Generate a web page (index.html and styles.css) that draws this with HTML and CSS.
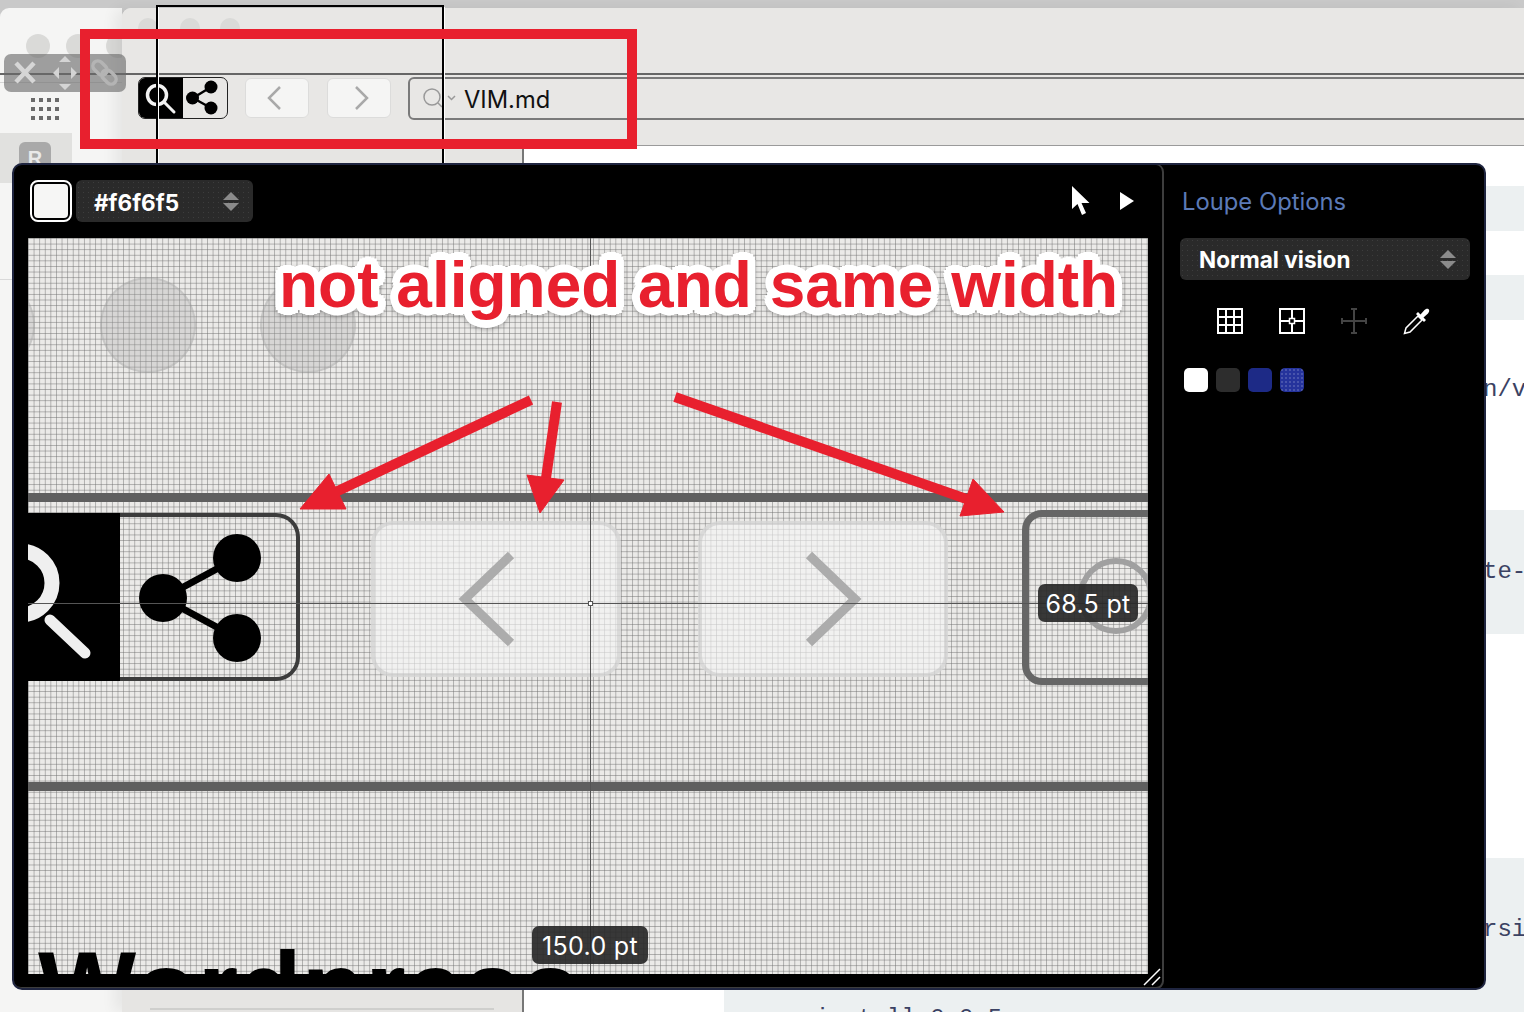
FILE: index.html
```html
<!DOCTYPE html>
<html lang="en">
<head>
<meta charset="utf-8">
<title>Loupe annotation</title>
<link rel="stylesheet" href="styles.css">
</head>
<body>
<div class="desktop">
  <div class="back-window">
    <i class="light l1"></i><i class="light l2"></i><i class="light l3"></i>
    <div class="dots"><i></i><i></i><i></i><i></i><i></i><i></i><i></i><i></i><i></i><i></i><i></i><i></i></div>
    <div class="side-tab"><span class="badge">R</span></div>
    <div class="side-rule"></div>
  </div>

  <div class="front-window">
    <div class="toolbar">
      <i class="light f1"></i><i class="light f2"></i><i class="light f3"></i>
      <div class="segment">
        <div class="seg-on">
          <svg width="45" height="42" viewBox="0 0 45 42"><circle cx="19" cy="18" r="9.500" fill="none" stroke="#f2f2f2" stroke-width="3.500"/><path d="M26 25 36 35" stroke="#f2f2f2" stroke-width="3" stroke-linecap="round"/></svg>
        </div>
        <div class="seg-off">
          <svg width="43" height="40" viewBox="0 0 43 40"><path d="M10 20 28 9M10 20 28 30" stroke="#000" stroke-width="2.500"/><circle cx="28" cy="9" r="6.500"/><circle cx="9.500" cy="20" r="6.500"/><circle cx="28" cy="30" r="6.500"/></svg>
        </div>
      </div>
      <div class="nav-btn nav-back">
        <svg width="16" height="26" viewBox="0 0 16 26"><path d="M14 2 3 13 14 24" fill="none" stroke="#a9a9a9" stroke-width="2.500"/></svg>
      </div>
      <div class="nav-btn nav-fwd">
        <svg width="16" height="26" viewBox="0 0 16 26"><path d="M2 2 13 13 2 24" fill="none" stroke="#a9a9a9" stroke-width="2.500"/></svg>
      </div>
      <div class="field">
        <svg width="40" height="24" viewBox="0 0 40 24"><circle cx="10" cy="10" r="8" fill="none" stroke="#999" stroke-width="1.500"/><path d="M16 16 20 20M26 9l3.500 3.500L33 9" fill="none" stroke="#999" stroke-width="1.500"/></svg>
        <span class="field-text">VIM.md</span>
      </div>
    </div>
    <div class="below">
      <div class="sidebar"><div class="sidebar-rule"></div></div>
      <div class="content">
        <div class="spacer s1"></div>
        <div class="code c1"></div>
        <div class="spacer s2"></div>
        <div class="code c2"></div>
        <div class="spacer s3"><span class="mono m1">n/v</span></div>
        <div class="code c3"><span class="mono m2">te-</span></div>
        <div class="spacer s4"></div>
        <div class="code c4"><span class="mono m3">rsi</span><span class="mono m4">install 0.0.5</span></div>
      </div>
    </div>
  </div>

  <div class="hline h1"></div>
  <div class="hline h2"></div>
  <div class="marquee"></div>

  <div class="drag-bar">
    <svg width="122" height="38" viewBox="0 0 122 38">
      <path d="M12 9 30 28M30 9 12 28" stroke="#d6d6d6" stroke-width="4.500"/>
      <path d="M61 2l6 6H55zM61 36l6-6H55zM49 19l6-6v12zM73 19l-6-6v12z" fill="#d4d4d4"/>
      <g fill="none" stroke="#b4b4b4" stroke-width="3.500">
        <rect x="88" y="9" width="16" height="10" rx="5" transform="rotate(45 96 14)"/>
        <rect x="97" y="18" width="16" height="10" rx="5" transform="rotate(45 105 23)"/>
      </g>
    </svg>
  </div>

  <div class="annotation-box"></div>

  <section class="loupe">
    <div class="loupe-main">
      <header class="loupe-head">
        <div class="swatch"><i></i></div>
        <div class="select hex">
          <span class="sel-label">#f6f6f5</span>
          <span class="updown"><i class="up"></i><i class="down"></i></span>
        </div>
        <div class="head-tools">
          <svg width="20" height="30" viewBox="0 0 20 30"><path d="M1 0V23L6.500 18 11 29 15 27 10.500 17H18.500Z" fill="#fff"/></svg>
          <svg class="play" width="14" height="18" viewBox="0 0 14 18"><path d="M0 0 14 9 0 18Z" fill="#fff"/></svg>
        </div>
      </header>
      <div class="view">
        <i class="blob b0"></i><i class="blob b1"></i><i class="blob b2"></i>
        <i class="bar bar1"></i><i class="bar bar2"></i>
        <div class="big-seg">
          <div class="big-on">
            <svg width="92" height="168" viewBox="0 0 92 168"><circle cx="-8" cy="70" r="32" fill="none" stroke="#efefef" stroke-width="15"/><path d="M22 107 57 140" stroke="#efefef" stroke-width="11" stroke-linecap="round"/></svg>
          </div>
          <div class="big-off">
            <svg width="176" height="168" viewBox="0 0 176 168"><path d="M43 85 117 45M43 85 117 125" stroke="#000" stroke-width="7"/><circle cx="117" cy="45" r="24"/><circle cx="43" cy="85" r="24"/><circle cx="117" cy="125" r="24"/></svg>
          </div>
        </div>
        <div class="big-btn back">
          <svg width="62" height="100" viewBox="0 0 62 100"><path d="M54 6 8 50 54 94" fill="none" stroke="#acacac" stroke-width="9"/></svg>
        </div>
        <div class="big-btn fwd">
          <svg width="62" height="100" viewBox="0 0 62 100"><path d="M8 6 54 50 8 94" fill="none" stroke="#acacac" stroke-width="9"/></svg>
        </div>
        <div class="big-field"><i class="big-ring"></i></div>
        <div class="word">Wordpress</div>
        <i class="cross-v"></i><i class="cross-h"></i><i class="cross-dot"></i>
        <div class="tip tip-w">68.5 pt</div>
        <div class="tip tip-h">150.0 pt</div>
      </div>
      <svg class="grip" width="18" height="18" viewBox="0 0 18 18"><path d="M1 17 17 1M9 17 17 9" stroke="#fff" stroke-width="1.500"/></svg>
    </div>
    <aside class="options">
      <h2 class="opt-title">Loupe Options</h2>
      <div class="select vision">
        <span>Normal vision</span>
        <span class="updown"><i class="up"></i><i class="down"></i></span>
      </div>
      <div class="opt-icons">
        <svg width="26" height="26" viewBox="0 0 26 26"><path d="M1 1H25V25H1ZM9 1V25M17 1V25M1 9H25M1 17H25" fill="none" stroke="#fff" stroke-width="2"/></svg>
        <svg width="26" height="26" viewBox="0 0 26 26"><path d="M1 1H25V25H1ZM13 1V10M13 16V25M1 13H10M16 13H25" fill="none" stroke="#fff" stroke-width="2"/><rect x="10.500" y="10.500" width="5" height="5" fill="none" stroke="#fff" stroke-width="1.500"/></svg>
        <svg width="26" height="26" viewBox="0 0 26 26"><path d="M13 1V25M1 13H25M10 1H16M10 25H16M1 10V16M25 10V16" fill="none" stroke="#444" stroke-width="2"/></svg>
        <svg width="28" height="28" viewBox="0 0 28 28"><path d="M15 9 3 21 1.500 26.500 7 25 19 13Z" fill="none" stroke="#fff" stroke-width="1.500"/><path d="M13 7 21 15 23 13 20.500 10.500 25 6.500C28 3 25 0 21.500 3L17.500 7.500 15 5Z" fill="#fff"/></svg>
      </div>
      <div class="opt-swatches">
        <i class="sw white"></i><i class="sw grey"></i><i class="sw navy"></i><i class="sw blue"></i>
      </div>
    </aside>
  </section>

  <div class="callout">not aligned and same width</div>
  <svg class="arrows" width="1524" height="1012" viewBox="0 0 1524 1012">
    <g fill="#e8202e" stroke="#e8202e">
      <path d="M531 400 325 497" stroke-width="10" fill="none"/>
      <path d="M300 509 346 509 329 474Z" stroke-width="1"/>
      <path d="M557 402 545 485" stroke-width="10" fill="none"/>
      <path d="M540 513 564 480 527 475Z" stroke-width="1"/>
      <path d="M675 397 975 502" stroke-width="10" fill="none"/>
      <path d="M1004 512 973 479 960 516Z" stroke-width="1"/>
    </g>
  </svg>
</div>
</body>
</html>
```

FILE: styles.css
```css
* { box-sizing: border-box; }
html, body { margin: 0; padding: 0; }
body { width: 1524px; height: 1012px; overflow: hidden; background: #c9c9c9; font-family: Inter, "Liberation Sans", sans-serif; }
i { display: block; }

.desktop { position: relative; width: 1524px; height: 1012px; overflow: hidden; }

/* windows stacked on the desktop */
.back-window { position: absolute; left: 0; top: 8px; width: 122px; height: 1004px; background: #f5f5f4; border-top-left-radius: 9px; }
.light { position: absolute; border-radius: 50%; background: #dadad8; }
.l1, .l2, .l3 { width: 24px; height: 24px; top: 26px; }
.l1 { left: 26px; }
.l2 { left: 66px; }
.l3 { left: 106px; }
.dots { position: absolute; left: 31px; top: 90px; display: grid; grid-template-columns: repeat(4, 4px); grid-auto-rows: 4px; column-gap: 4px; row-gap: 5px; }
.dots i { background: #6a6a6a; }
.side-tab { position: absolute; left: 0; top: 125px; width: 72px; height: 50px; background: #e1e1df; padding: 9px 0 0 19px; }
.badge { display: block; width: 32px; height: 32px; border-radius: 6px; background: #a9a9a9; color: #e9e9e9; font: 700 20px/32px "Liberation Sans", sans-serif; text-align: center; }
.side-rule { position: absolute; left: 0; top: 271px; width: 14px; height: 1px; background: #d9d9d9; }

.front-window { position: absolute; left: 122px; top: 8px; width: 1402px; height: 1004px; display: flex; flex-direction: column; border-top-left-radius: 9px; overflow: hidden; box-shadow: -8px 0 14px rgba(0,0,0,.06); background: #e8e7e5; }
.toolbar { position: relative; flex: none; height: 138px; display: flex; align-items: flex-start; padding: 69px 0 0 16px; background: #e8e7e5; border-bottom: 1px solid #9a9a9a; }
.f1, .f2, .f3 { width: 20px; height: 20px; top: 10px; }
.f1 { left: 16px; }
.f2 { left: 58px; }
.f3 { left: 98px; }
.segment { display: flex; width: 90px; height: 42px; border: 1px solid #222; border-radius: 7px; overflow: hidden; }
.seg-on { width: 45px; background: #000; margin: -1px 0 0 -1px; height: 42px; }
.seg-off { flex: 1; }
.seg-on svg, .seg-off svg { display: block; }
.nav-btn { width: 64px; height: 40px; margin: 1px 0 0 17px; background: #f5f5f4; border: 1px solid #dcdcdb; border-radius: 6px; display: flex; align-items: center; justify-content: center; }
.nav-fwd { margin-left: 18px; }
.nav-back svg { margin-right: 6px; }
.nav-fwd svg { margin-left: 6px; }
.field { flex: 1; height: 43px; margin: 0 -8px 0 17px; display: flex; align-items: center; padding-left: 12px; border: 2px solid #7a7a7a; border-radius: 6px; }
.field-text { margin: 2px 0 0 2px; font-size: 23.700px; color: #111; font-family: Inter, sans-serif; }

.below { flex: 1; display: flex; min-height: 0; }
.sidebar { width: 402px; background: #e6e5e3; border-right: 2px solid #777; position: relative; }
.sidebar-rule { position: absolute; left: 28px; right: 28px; bottom: 2px; height: 2px; background: #cfcfcd; }
.content { flex: 1; background: #fff; display: flex; flex-direction: column; }
.spacer { flex: none; }
.s1 { height: 40px; }
.s2 { height: 44px; }
.s3 { height: 190px; position: relative; }
.s4 { height: 224px; }
.code { flex: none; margin-left: 200px; background: #ecf0f1; position: relative; }
.c1 { height: 45px; }
.c2 { height: 45px; }
.c3 { height: 124px; }
.c4 { flex: 1; }
.mono { position: absolute; font: 24px/28px "Liberation Mono", monospace; color: #3b4263; white-space: pre; }
.m1 { left: 959px; top: 56px; }
.m2 { left: 759px; top: 48px; }
.m3 { left: 759px; top: 58px; }
.m4 { left: 91px; top: 147px; }

/* screenshot annotations and floating overlays */
.hline { position: absolute; left: 0; right: 0; }
.h1 { top: 73px; height: 2px; background: #666; }
.h2 { top: 82px; width: 122px; height: 1px; background: #d4d4d4; }
.marquee { position: absolute; left: 156px; top: 5px; width: 288px; height: 160px; border: 2px solid #000; border-bottom: 0; }
.marquee::before, .marquee::after { content: ""; position: absolute; top: 0; bottom: 0; width: 1px; background: #fff; }
.marquee::before { left: 0; }
.marquee::after { right: -3px; }
.drag-bar { position: absolute; left: 4px; top: 54px; width: 122px; height: 38px; border-radius: 7px; background: rgba(105,105,105,.62); }
.drag-bar svg { display: block; }
.annotation-box { position: absolute; left: 80px; top: 29px; width: 557px; height: 120px; border: 10px solid #e8202e; }

.loupe { position: absolute; left: 12px; top: 163px; width: 1474px; height: 827px; display: flex; background: #000; border: 2px solid #1f2540; border-radius: 10px; overflow: hidden; }
.loupe-main { position: relative; width: 1151px; flex: none; padding: 15px 14px 0 14px; border-right: 2px solid #3d3d3d; border-bottom: 2px solid #3d3d3d; border-top: 1px solid #3d3d3d; border-left: 1px solid #3d3d3d; border-radius: 8px; height: 825px; margin-left: -1px; margin-top: -1px; }
.loupe-head { display: flex; align-items: center; height: 42px; gap: 4px; margin-left: 2px; }
.swatch { width: 42px; height: 42px; padding: 2px; border: 2px solid #fff; border-radius: 8px; background: #000; }
.swatch i { width: 100%; height: 100%; background: #f6f6f5; border-radius: 4px; }
.select { display: flex; align-items: center; justify-content: space-between; height: 42px; border-radius: 6px; color: #fff; font-weight: 700; font-size: 22.500px;
  background: #2a2a2a radial-gradient(circle, rgba(255,255,255,.09) .6px, transparent .8px) 0 0 / 5px 5px; }
.hex { width: 177px; padding: 0 14px 0 18px; }
.sel-label { margin-top: 2px; }
.updown { display: flex; flex-direction: column; gap: 3px; }
.up { border: 8px solid transparent; border-top: 0; border-bottom: 8px solid #8b8b8b; }
.down { border: 8px solid transparent; border-bottom: 0; border-top: 8px solid #8b8b8b; }
.head-tools { margin-left: auto; display: flex; align-items: center; gap: 29px; padding-right: 14px; }
.head-tools svg { display: block; }

.view { position: relative; margin-top: 16px; height: 736px; width: 1120px; overflow: hidden;
  background-color: #ebeae8;
  background-image: linear-gradient(90deg, rgba(110,110,110,.5) 1px, transparent 1px), linear-gradient(rgba(110,110,110,.5) 1px, transparent 1px);
  background-size: 5.600px 5.600px; }
.blob { position: absolute; width: 96px; height: 96px; top: 39px; border-radius: 50%; background: rgba(170,170,170,.3); border: 2px solid rgba(150,150,150,.25); }
.b0 { left: -89px; }
.b1 { left: 72px; }
.b2 { left: 232px; }
.bar { position: absolute; left: 0; right: 0; height: 9px; background: #5f5f5f; }
.bar1 { top: 255px; }
.bar2 { top: 544px; }
.big-seg { position: absolute; left: 0; top: 275px; width: 272px; height: 168px; display: flex; }
.big-on { width: 92px; flex: none; background: #000; overflow: hidden; }
.big-off { flex: 1; border: 4px solid #3c3c3c; border-left: 0; border-radius: 0 24px 24px 0; }
.big-on svg { display: block; }
.big-off svg { display: block; margin-top: -4px; }
.big-btn { position: absolute; top: 283px; width: 250px; height: 156px; background: rgba(246,246,245,.62); border: 4px solid rgba(190,190,190,.45); border-radius: 22px; display: flex; align-items: center; justify-content: center; }
.back { left: 343px; }
.fwd { left: 670px; }
.back svg { margin-right: 16px; }
.fwd svg { margin-left: 18px; }
.big-field { position: absolute; left: 994px; top: 272px; width: 200px; height: 175px; border: 7px solid #666; border-radius: 20px; }
.big-ring { position: absolute; left: 49px; top: 41px; width: 76px; height: 76px; border: 6px solid #a0a0a0; border-radius: 50%; }
.word { position: absolute; left: 10px; top: 698px; font: 700 104px/104px "Liberation Sans", sans-serif; color: #000; white-space: nowrap; }
.cross-v { position: absolute; left: 562px; top: 0; bottom: 0; width: 1px; background: #555; }
.cross-h { position: absolute; left: 0; right: 0; top: 365px; height: 1px; background: #555; }
.cross-dot { position: absolute; left: 560px; top: 363px; width: 5px; height: 5px; background: #fff; border: 1px solid #555; }
.tip { position: absolute; height: 38px; border-radius: 7px; background: rgba(40,40,40,.92); color: #fff; font-size: 25px; letter-spacing: .3px; line-height: 40px; text-align: center; white-space: nowrap; }
.tip-w { left: 1010px; top: 346px; width: 100px; }
.tip-h { left: 504px; top: 688px; width: 116px; }
.grip { position: absolute; right: 1px; bottom: 1px; display: block; }

.options { flex: 1; padding: 0 14px 0 17px; }
.opt-title { margin: 21px 0 20px 1px; font-size: 23.800px; line-height: 32px; font-weight: 400; color: #5b7ab7; }
.vision { width: 290px; padding: 0 14px 0 19px; margin-left: -1px; }
.opt-icons { display: flex; align-items: center; gap: 36px; margin: 27px 0 0 36px; height: 28px; }
.opt-icons svg { display: block; }
.opt-swatches { display: flex; gap: 8px; margin: 33px 0 0 3px; }
.sw { width: 24px; height: 24px; border-radius: 5px; }
.white { background: #fff; }
.grey { background: #2d2d2d; }
.navy { background: #1d2a86; }
.blue { background: #25339c radial-gradient(circle, rgba(255,255,255,.35) .6px, transparent .8px) 0 0 / 4px 4px; }

.callout { position: absolute; left: 279px; top: 249px; font: 700 64px/72px "Liberation Sans", sans-serif; color: #e8202e; white-space: nowrap;
  text-shadow: 8px 0 #fff, -8px 0 #fff, 0 8px #fff, 0 -8px #fff, 5.700px 5.700px #fff, -5.700px 5.700px #fff, 5.700px -5.700px #fff, -5.700px -5.700px #fff,
    7.400px 3px #fff, -7.400px 3px #fff, 7.400px -3px #fff, -7.400px -3px #fff, 3px 7.400px #fff, -3px 7.400px #fff, 3px -7.400px #fff, -3px -7.400px #fff,
    4px 0 #fff, -4px 0 #fff, 0 4px #fff, 0 -4px #fff, 3px 3px #fff, -3px 3px #fff, 3px -3px #fff, -3px -3px #fff;
  filter: drop-shadow(0 2px 2px rgba(0,0,0,.22)); }
.arrows { position: absolute; left: 0; top: 0; pointer-events: none; }
```
